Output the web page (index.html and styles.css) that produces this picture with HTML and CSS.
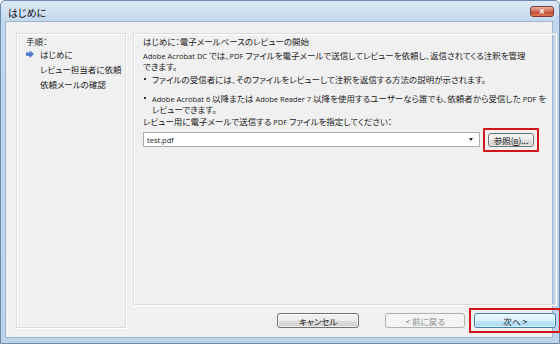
FILE: index.html
```html
<!DOCTYPE html>
<html lang="ja">

<head>
    <meta charset="UTF-8">
    <meta name="viewport" content="width=device-width, initial-scale=1.0">
    <link rel="stylesheet" href="styles.css">
    <title>はじめに</title>
</head>

<body>
    <div class="window">
        <div class="titlebar">
            <span class="title">はじめに</span>
            <span class="close-btn">✕</span>
        </div>
        <div class="client">
            <div class="steps">
                <div class="steps-title">手順：</div>
                <ul class="step-list">
                    <li class="current">
                        <svg class="step-arrow" width="8" height="8" viewBox="0 0 8 8">
                            <defs>
                                <linearGradient id="arrowFill" x1="0" y1="0" x2="0" y2="1">
                                    <stop offset="0" stop-color="#7ea7e6" />
                                    <stop offset="1" stop-color="#2b57b0" />
                                </linearGradient>
                            </defs>
                            <polygon points="0,2.3 3.6,2.3 3.6,0 8,4 3.6,8 3.6,5.7 0,5.7" fill="url(#arrowFill)" />
                        </svg>
                        はじめに
                    </li>
                    <li>レビュー担当者に依頼</li>
                    <li>依頼メールの確認</li>
                </ul>
            </div>
            <div class="main">
                <div class="content">
                    <div class="content-title">はじめに：電子メールベースのレビューの開始</div>
                    <p class="intro"><span class="latin">Adobe Acrobat DC</span> では、<span class="latin">PDF</span> ファイルを電子メールで送信してレビューを依頼し、返信されてくる注釈を管理<br>できます。</p>
                    <ul class="notes">
                        <li class="note-first">ファイルの受信者には、そのファイルをレビューして注釈を返信する方法の説明が示されます。</li>
                        <li class="note-second"><span class="latin">Adobe Acrobat 6</span> 以降または <span class="latin">Adobe Reader 7</span> 以降を使用するユーザーなら誰でも、依頼者から受信した <span class="latin">PDF</span> を<br>レビューできます。</li>
                    </ul>
                    <div class="file-label">レビュー用に電子メールで送信する <span class="latin">PDF</span> ファイルを指定してください：</div>
                    <div class="file-row">
                        <div class="combo">
                            <span class="combo-value">test.pdf</span>
                            <span class="combo-arrow"></span>
                        </div>
                        <span class="highlight browse-mark">
                            <button class="btn browse-btn">参照(<u>B</u>)...</button>
                        </span>
                    </div>
                </div>
                <div class="footer">
                    <button class="btn cancel-btn">キャンセル</button>
                    <button class="btn back-btn" disabled>&lt; 前に戻る</button>
                    <span class="highlight next-mark">
                        <button class="btn next-btn">次へ &gt;</button>
                    </span>
                </div>
            </div>
        </div>
    </div>
</body>

</html>
```

FILE: styles.css
```css
* {
    margin: 0;
    padding: 0;
    box-sizing: border-box;
}

body {
    width: 560px;
    height: 344px;
    overflow: hidden;
    font-family: "Noto Sans CJK JP", "Noto Sans", sans-serif;
    font-size: 8.5px;
    font-feature-settings: "palt";
    color: #1a1a1a;
    background: #ffffff;
}

.window {
    width: 560px;
    height: 344px;
    display: flex;
    flex-direction: column;
    border: 1px solid #6d8bab;
    border-radius: 5px 5px 0 0;
    background: linear-gradient(#dce8f5, #c2d7ed 22px, #bcd3ea);
}

.titlebar {
    height: 20px;
    display: flex;
    align-items: center;
    justify-content: space-between;
    padding: 3px 5px 0 7px;
}

.title {
    font-size: 10px;
    color: #111;
}

.close-btn {
    width: 24px;
    height: 11px;
    margin-top: -3px;
    display: flex;
    align-items: center;
    justify-content: center;
    font-size: 7px;
    font-weight: bold;
    color: #fff;
    border: 1px solid #7b3a30;
    border-radius: 3px;
    background: linear-gradient(#eab2a3, #d16c58 50%, #c4432f 51%, #d97a5c);
}

.client {
    flex: 1;
    display: flex;
    gap: 7px;
    margin: 0 6px 5px 4px;
    padding: 11px 9px 9px 10px;
    background: #f0f0f0;
    border: 1px solid #9fb6cf;
}

.steps {
    width: 110px;
    padding: 1px 9px;
    border: 1px solid #dcdcdc;
    box-shadow: inset 1px 1px 0 #fff, 1px 1px 0 #fff;
}

.steps-title {
    line-height: 12px;
}

.step-list {
    list-style: none;
}

.step-list li {
    position: relative;
    line-height: 15px;
    padding-left: 14px;
    white-space: nowrap;
}

.step-arrow {
    position: absolute;
    left: 0;
    top: 3px;
}

.main {
    flex: 1;
    display: flex;
    flex-direction: column;
}

.content {
    flex: 1;
    padding: 1px 9px;
    border: 1px solid #dcdcdc;
    box-shadow: inset 1px 1px 0 #fff, 1px 1px 0 #fff;
}

.content-title {
    line-height: 12px;
}

.latin {
    font-family: "Open Sans", "Noto Sans", sans-serif;
    font-size: 7.5px;
}

.intro {
    margin-top: 3px;
    line-height: 10px;
    white-space: nowrap;
}

.notes {
    list-style: none;
    margin-top: 3px;
}

.notes li {
    position: relative;
    padding-left: 9px;
    line-height: 10px;
    white-space: nowrap;
}

.notes li::before {
    content: "";
    position: absolute;
    left: 1px;
    top: 4px;
    width: 2px;
    height: 2px;
    background: #333;
}

.notes .note-second {
    margin-top: 9px;
}

.file-label {
    margin-top: 2px;
    line-height: 10px;
}

.file-row {
    display: flex;
    align-items: center;
    margin-top: 5px;
}

.combo {
    width: 337px;
    height: 15px;
    display: flex;
    align-items: center;
    justify-content: space-between;
    padding: 0 6px 0 3px;
    background: #fff;
    border: 1px solid #abadb3;
}

.combo-value {
    font-family: "Open Sans", "Noto Sans", sans-serif;
    font-size: 7.5px;
}

.combo-arrow {
    width: 0;
    height: 0;
    border-left: 2.5px solid transparent;
    border-right: 2.5px solid transparent;
    border-top: 3px solid #222;
}

.btn {
    height: 14px;
    font-family: inherit;
    font-size: 8.5px;
    font-feature-settings: "palt";
    color: #1a1a1a;
    border: 1px solid #707070;
    border-radius: 3px;
    background: linear-gradient(#f2f2f2, #ebebeb 50%, #dddddd 51%, #cfcfcf);
    box-shadow: inset 0 0 0 1px rgba(255, 255, 255, 0.7);
}

.btn u {
    font-family: "Open Sans", sans-serif;
    font-size: 7.5px;
}

/* red marker frame drawn around a button */
.highlight {
    display: flex;
    padding: 3px;
    border: 2px solid #d2141c;
}

.browse-mark {
    margin: -5px -5px -5px 3px;
}

.browse-btn {
    width: 46px;
}

.footer {
    height: 15px;
    margin-top: 8px;
    display: flex;
    justify-content: flex-end;
}

.footer .btn {
    height: 15px;
}

.cancel-btn {
    width: 82px;
}

.back-btn {
    width: 80px;
    margin-left: 26px;
    color: #8a8a8a;
    border-color: #adb2b5;
    background: #f4f4f4;
    box-shadow: none;
}

.next-mark {
    margin: -5px -5px -5px 4px;
}

.next-btn {
    width: 82px;
    border-color: #3c7fb1;
    background: linear-gradient(#eaf6fd, #d9f0fc 50%, #bee6fd 51%, #a7d9f5);
}
```
